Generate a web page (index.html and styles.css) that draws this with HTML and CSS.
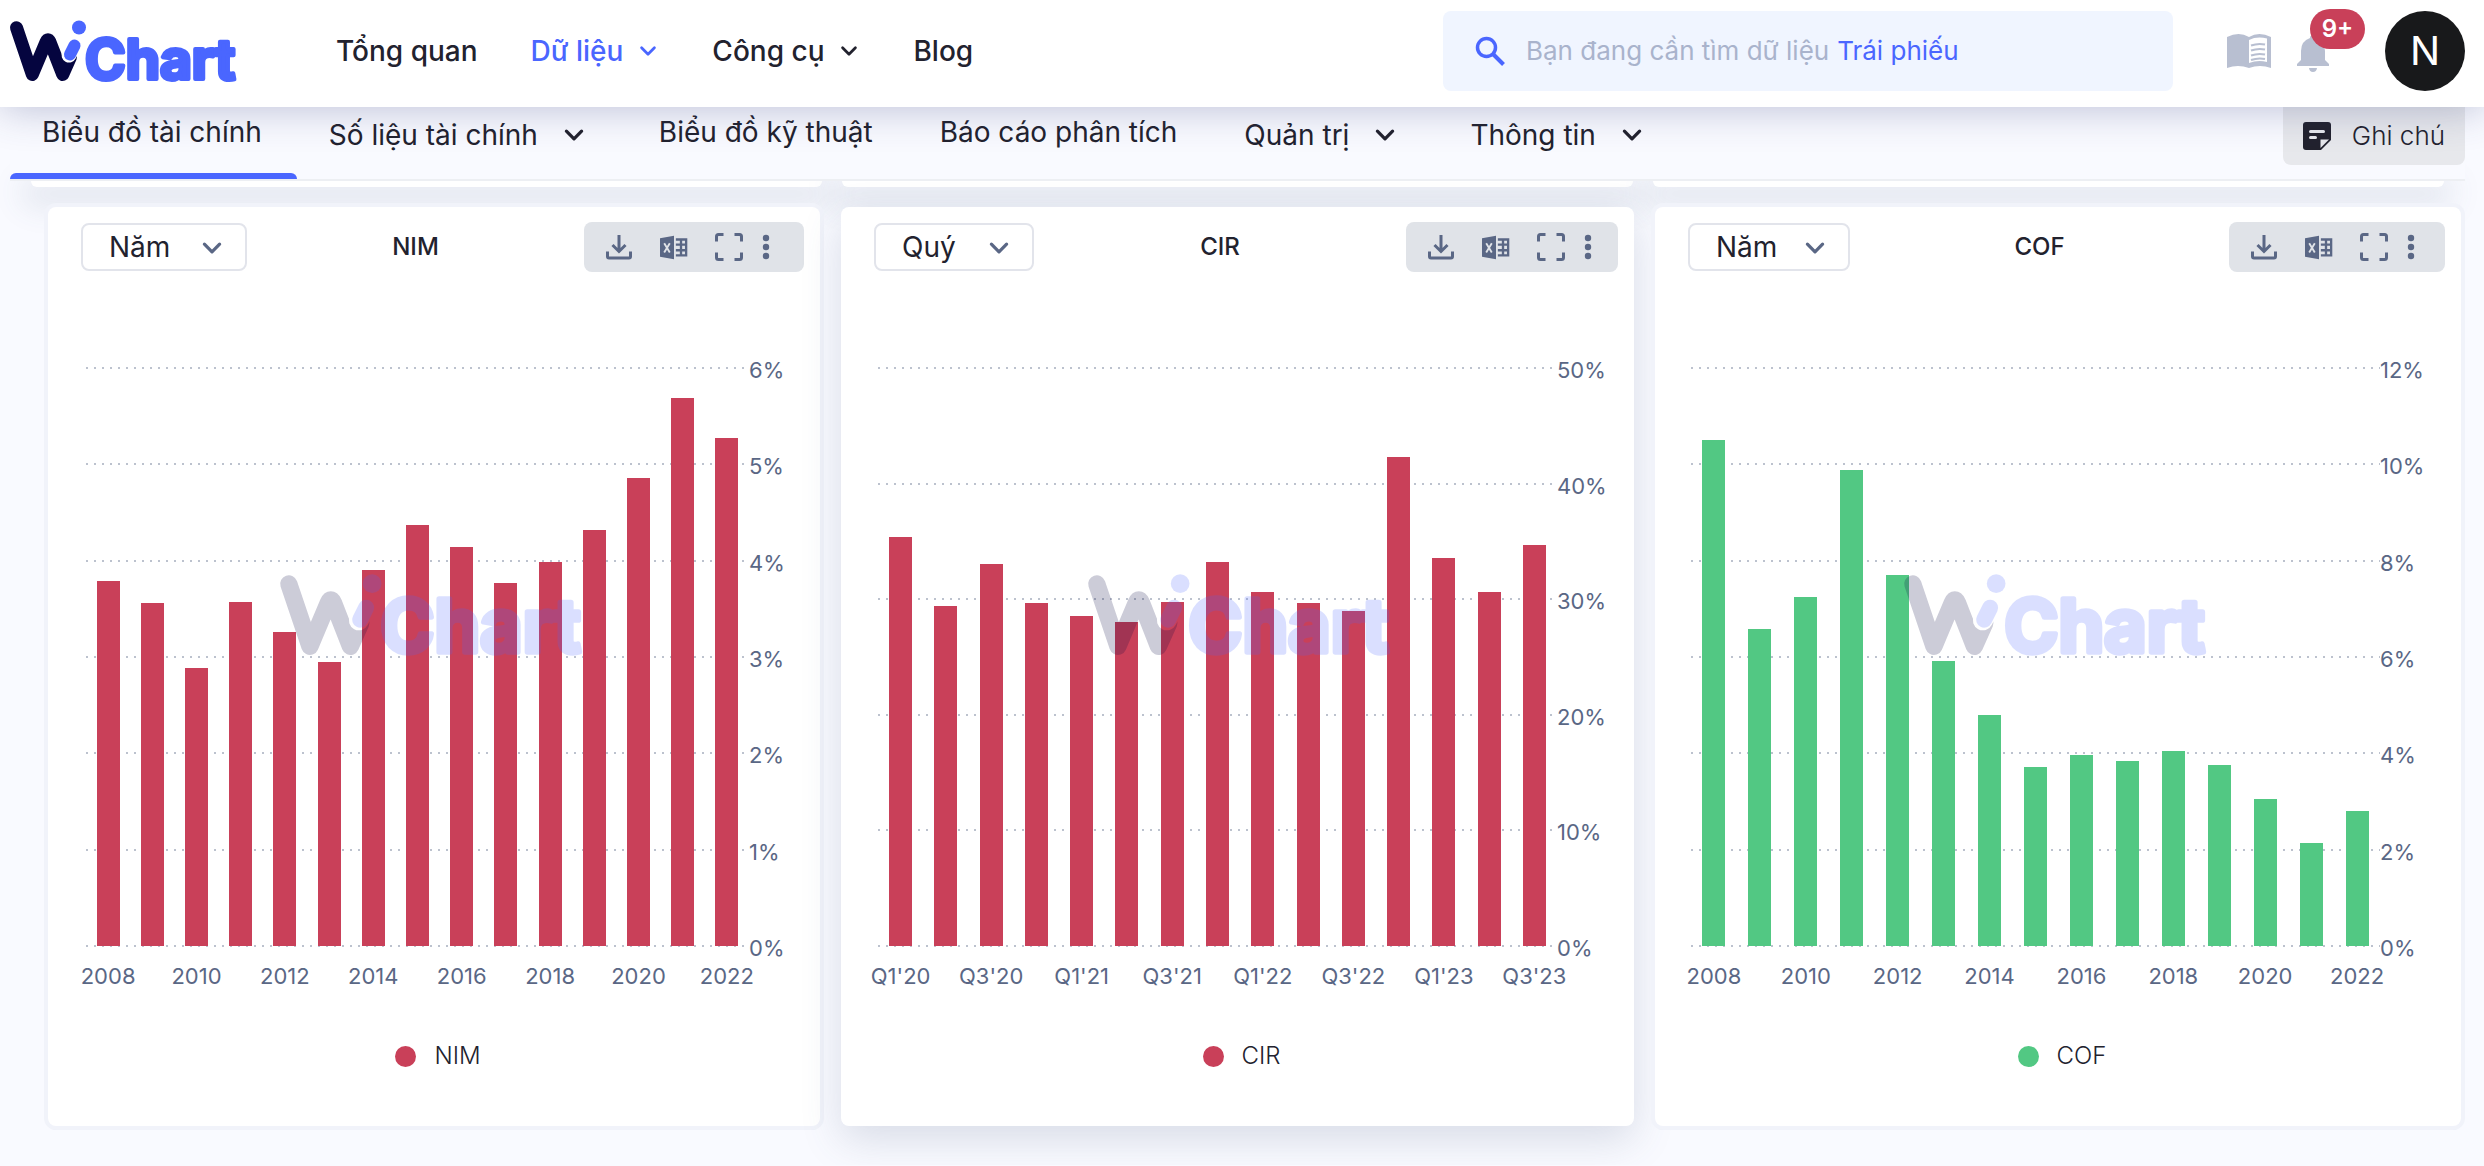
FILE: index.html
```html
<!DOCTYPE html>
<html lang="vi">
<head>
<meta charset="utf-8">
<meta name="viewport" content="width=device-width, initial-scale=1">
<title>WiChart</title>
<link rel="stylesheet" href="styles.css">
</head>
<body>
<svg class="defs" aria-hidden="true">
  <mask id="w-cut" maskUnits="userSpaceOnUse" x="-10" y="-10" width="260" height="90">
    <rect x="-10" y="-10" width="260" height="90" fill="#fff"/>
    <path d="M64.500 23.500 59 34" stroke="#000" stroke-width="15" stroke-linecap="round"/>
  </mask>
  <symbol id="logo" viewBox="0 0 230 60">
    <path mask="url(#w-cut)" d="M6.500 6.700 22.300 53.500 36 21Q38 16.500 40 21L52.700 53.500 60.500 36" fill="none" stroke="#05053f" stroke-width="13" stroke-linecap="round" stroke-linejoin="round"/>
    <path d="M64.500 24.500 60 33.500" stroke="#4a66ff" stroke-width="12" stroke-linecap="round"/>
    <circle cx="69" cy="6.500" r="7" fill="#4a66ff"/>
    <text class="logo-word" x="75" y="58">Chart</text>
  </symbol>
  <symbol id="chevron" viewBox="0 0 24 24"><path d="m5 8.500 7 7 7-7" fill="none" stroke="currentColor" stroke-width="3" stroke-linecap="round" stroke-linejoin="round"/></symbol>
  <symbol id="download" viewBox="0 0 28 28"><path d="M14 2v16M7.500 12l6.500 6.500 6.500-6.500M2.500 18.500v5q0 1.500 1.500 1.500h20q1.500 0 1.500-1.500v-5" fill="none" stroke="currentColor" stroke-width="3"/></symbol>
  <symbol id="excel" viewBox="0 0 30 28"><path d="M0 4.500 15 2v25L0 24.500z" fill="currentColor"/><path d="m4.500 10 6 10m0-10-6 10" stroke="#e0e3e8" stroke-width="2"/><path d="M17 6h11v17H17M17 11.500h11M17 17.500h11M22.500 6v17" fill="none" stroke="currentColor" stroke-width="2.500"/></symbol>
  <symbol id="expand" viewBox="0 0 28 28"><path d="M1.500 8.500V3.500q0-2 2-2h5M19.500 1.500h5q2 0 2 2v5M26.500 19.500v5q0 2-2 2h-5M8.500 26.500h-5q-2 0-2-2v-5" fill="none" stroke="currentColor" stroke-width="3"/></symbol>
  <symbol id="dots" viewBox="0 0 8 28"><circle cx="4" cy="5" r="3.200" fill="currentColor"/><circle cx="4" cy="14" r="3.200" fill="currentColor"/><circle cx="4" cy="23" r="3.200" fill="currentColor"/></symbol>
</svg>

<header class="topbar">
  <a class="brand" href="#" aria-label="WiChart"><svg><use href="#logo"/></svg></a>
  <nav class="menu">
    <a href="#">Tổng quan</a>
    <a class="active" href="#">Dữ liệu<svg><use href="#chevron"/></svg></a>
    <a href="#">Công cụ<svg><use href="#chevron"/></svg></a>
    <a href="#">Blog</a>
  </nav>
  <label class="search">
    <svg viewBox="0 0 30 30" aria-hidden="true"><circle cx="11.500" cy="11.500" r="9" fill="none" stroke="currentColor" stroke-width="3.500"/><path d="m18 18 10.500 10.500" stroke="currentColor" stroke-width="4"/></svg>
    <input type="text" placeholder="Bạn đang cần tìm dữ liệu" aria-label="Tìm kiếm">
    <span>Trái phiếu</span>
  </label>
  <div class="account">
    <button class="plain" aria-label="Hướng dẫn"><svg class="book" viewBox="0 0 44 34"><path d="M0 3Q12-3 22 3 32-3 44 3v31q-11-4-22 0-11-4-22 0z" fill="currentColor"/><path d="M22 6q8-4 18-1.500V28q-9-2.500-18 1z" fill="#fff"/><path d="M24 11.500q7-2.500 14-1M24 16.500q7-2.500 14-1M24 21.500q7-2.500 14-1M24 26q7-2.500 14-1" fill="none" stroke="currentColor" stroke-width="2"/></svg></button>
    <button class="plain bell" aria-label="Thông báo"><svg viewBox="0 0 32 38"><path d="M16 1q3 0 3 3 9 3 9 13v9l4 4v2H0v-2l4-4v-9Q4 7 13 4q0-3 3-3zM12 34h8q-.5 4-4 4t-4-4z" fill="currentColor"/></svg><span class="badge">9+</span></button>
    <button class="avatar">N</button>
  </div>
</header>

<div class="subbar">
  <nav class="tabs">
    <a class="current" href="#">Biểu đồ tài chính</a>
    <a class="drop" href="#">Số liệu tài chính<svg><use href="#chevron"/></svg></a>
    <a href="#">Biểu đồ kỹ thuật</a>
    <a href="#">Báo cáo phân tích</a>
    <a class="drop" href="#">Quản trị<svg><use href="#chevron"/></svg></a>
    <a class="drop" href="#">Thông tin<svg><use href="#chevron"/></svg></a>
  </nav>
  <button class="note"><svg viewBox="0 0 28 28" aria-hidden="true"><path d="M3 0h22q3 0 3 3v15L18 28H3q-3 0-3-3V3q0-3 3-3z" fill="currentColor"/><path d="M17.500 26V17.500H26z" fill="#e7e8ec"/><path d="M7.500 9.500h13M7.500 15.500h5" stroke="#e7e8ec" stroke-width="3" stroke-linecap="round"/></svg>Ghi chú</button>
</div>

<div class="previous" aria-hidden="true"><div></div><div></div><div></div></div>

<main class="cards">
  <section class="card card-nim" data-chart="NIM"></section>
  <section class="card card-cir" data-chart="CIR"></section>
  <section class="card card-cof" data-chart="COF"></section>
</main>
<script src="charts.js"></script>
</body>
</html>
```
FILE: styles.css
```css
* { box-sizing: border-box; }
body {
  margin: 0;
  background: #f9faff;
  color: #22222e;
  font-family: Inter, "Noto Sans", sans-serif;
  font-size: 28px;
  line-height: 36px;
}
a { color: inherit; text-decoration: none; }
button, select, input { font: inherit; color: inherit; }
button { border: 0; padding: 0; cursor: pointer; }
svg { display: block; flex: none; }
symbol { overflow: visible; }
.defs { position: absolute; width: 0; height: 0; }
.logo-word {
  font: 700 55px Inter, sans-serif;
  fill: #4a66ff;
  stroke: #4a66ff;
  stroke-width: 4px;
  stroke-linejoin: round;
}

.topbar {
  position: relative;
  z-index: 3;
  display: flex;
  align-items: center;
  height: 107px;
  padding: 0 19px 5px 10px;
  background: #fff;
  box-shadow: 0 2px 40px rgba(50, 60, 120, .3);
}
.brand svg { width: 230px; height: 60px; overflow: visible; }
.menu {
  display: flex;
  gap: 53px;
  margin-left: 96px;
  font-weight: 500;
}
.menu a { display: flex; align-items: center; gap: 14px; white-space: nowrap; }
.menu svg { width: 22px; height: 22px; }
.active { color: #4a66ff; }
.search {
  display: flex;
  align-items: center;
  width: 730px;
  height: 80px;
  margin-left: auto;
  padding: 0 32px;
  border-radius: 8px;
  background: #f0f5ff;
  color: #4a66ff;
  font-size: 26px;
}
.search svg { width: 30px; height: 30px; margin-right: 21px; }
.search input {
  field-sizing: content;
  padding: 0;
  border: 0;
  outline: 0;
  background: none;
}
.search input::placeholder { color: #a9b3cc; opacity: 1; }
.search span { margin-left: 8px; white-space: nowrap; }
.account { display: flex; align-items: center; margin-left: 54px; }
.plain { background: none; color: #b8bfd1; }
.book { width: 44px; height: 34px; }
.bell { position: relative; margin: 4px 56px 0 26px; }
.bell svg { width: 32px; height: 38px; }
.badge {
  position: absolute;
  left: 13px;
  top: -25px;
  width: 55px;
  height: 40px;
  border-radius: 20px;
  background: #c94059;
  color: #fff;
  font-size: 24px;
  font-weight: 600;
  line-height: 40px;
}
.avatar {
  width: 80px;
  height: 80px;
  border-radius: 50%;
  background: #18191b;
  color: #fff;
  font-size: 40px;
}

.subbar {
  position: relative;
  z-index: 2;
  display: flex;
  justify-content: space-between;
  height: 74px;
  margin: 0 19px 0 10px;
  border-bottom: 2px solid #edeff3;
  background: #f9faff;
}
.tabs { display: flex; }
.tabs a {
  display: flex;
  align-items: center;
  gap: 18px;
  height: 72px;
  padding: 0 35px 22px 32px;
  white-space: nowrap;
}
.tabs .drop { padding-bottom: 16px; }
.tabs svg { width: 36px; height: 26px; }
.tabs .current { position: relative; }
.tabs .current::after {
  content: "";
  position: absolute;
  inset: auto 0 0;
  height: 6px;
  border-radius: 6px 6px 0 0;
  background: #4a66ff;
}
.note {
  display: flex;
  align-items: center;
  gap: 21px;
  height: 58px;
  padding: 0 20px;
  border-radius: 0 0 8px 8px;
  background: #e7e8ec;
  font-size: 26px;
  font-weight: 300;
  white-space: nowrap;
}
.note svg { width: 28px; height: 28px; }

.previous {
  display: grid;
  grid-template-columns: repeat(3, 1fr);
  gap: 20px;
  padding: 0 40px 20px 31px;
}
.previous div {
  height: 6px;
  border-radius: 0 0 8px 8px;
  background: #fff;
  box-shadow: 0 10px 30px 10px rgba(70, 90, 120, .13);
}

.cards {
  position: relative;
  display: grid;
  grid-template-columns: 772fr 793fr 806fr;
  gap: 21px;
  padding: 0 23px 39px 48px;
}
.card {
  min-width: 0;
  padding-top: 15px;
  padding-bottom: 52px;
  border-radius: 8px;
  background: #fff;
  box-shadow: 0 0 0 4px #f1f3fa, 0 4px 0 0 #e7eaf1;
}
.card-nim { --accent: #c94059; --left: 38px; --right: 71px; --select: 166px; --tools: 220px; --mark: -138px; }
.card-cir {
  --accent: #c94059; --left: 37px; --right: 77px; --select: 160px; --tools: 212px; --mark: -130px;
  box-shadow: 0 14px 40px rgba(70, 90, 120, .18);
}
.card-cof { --accent: #52c883; --left: 36px; --right: 81px; --select: 162px; --tools: 216px; --mark: -132px; }

.card-head {
  display: flex;
  align-items: center;
  justify-content: space-between;
  height: 50px;
  padding: 0 16px 0 33px;
}
.card-head h2 { margin: 0; font-size: 24px; font-weight: 500; }
.period { position: relative; width: var(--select); }
.period select {
  appearance: none;
  width: 100%;
  height: 48px;
  padding: 0 26px;
  border: 2px solid #e2e4eb;
  border-radius: 8px;
  background: #fff;
}
.period svg {
  position: absolute;
  right: 22px;
  top: 12px;
  width: 26px;
  height: 26px;
  color: #5a6785;
  pointer-events: none;
}
.tools {
  display: flex;
  align-items: center;
  gap: 27px;
  width: var(--tools);
  height: 50px;
  padding-left: 21px;
  border-radius: 8px;
  background: #e0e3e8;
}
.tools button { background: none; color: #5a6785; }
.tools svg { width: 28px; height: 28px; }
.tools .more { margin-left: -8px; }
.tools .more svg { width: 8px; }

.chart {
  display: grid;
  grid-template-columns: 1fr var(--right);
  margin: 95px 0 0 var(--left);
  color: #5a6785;
  font-size: 22px;
  line-height: 28px;
}
.plot { position: relative; height: 580px; }
.lines {
  position: absolute;
  inset: 0;
  display: flex;
  flex-direction: column;
  justify-content: space-between;
}
.lines i {
  height: 2px;
  background: repeating-linear-gradient(90deg, #bcc2ce 0 2px, transparent 2px 8px);
}
.bars {
  position: relative;
  display: grid;
  grid-auto-flow: column;
  grid-auto-columns: 1fr;
  align-items: end;
  justify-items: center;
  height: 579px;
}
.bars i { width: 23px; background: var(--accent); }
.watermark {
  position: absolute;
  left: calc(50% + var(--mark));
  top: 208px;
  width: 307px;
  height: 80px;
  overflow: visible;
  opacity: .2;
}
.scale {
  display: flex;
  flex-direction: column;
  justify-content: space-between;
  margin: -11px 0 -15px;
}
.years {
  display: grid;
  grid-auto-flow: column;
  grid-auto-columns: minmax(0, 1fr);
  margin-top: 15px;
}
.years span { display: flex; justify-content: center; white-space: nowrap; }
.legend {
  display: flex;
  align-items: center;
  justify-content: center;
  gap: 18px;
  margin-top: 48px;
  padding-left: 8px;
  font-size: 24px;
  font-weight: 300;
}
.legend i { width: 21px; height: 21px; border-radius: 50%; background: var(--accent); }
```
FILE: charts.js
```js
const years = Array.from({ length: 15 }, (_, i) => String(2008 + i));
const quarters = Array.from({ length: 15 }, (_, i) => `Q${i % 4 + 1}'${20 + Math.floor(i / 4)}`);

const charts = {
  NIM: { period: 'Năm', max: 6, step: 1, labels: years,
    values: [3.78, 3.55, 2.88, 3.56, 3.25, 2.94, 3.90, 4.36, 4.13, 3.76, 3.98, 4.31, 4.85, 5.68, 5.26] },
  CIR: { period: 'Quý', max: 50, step: 10, labels: quarters,
    values: [35.3, 29.4, 33.0, 29.6, 28.5, 28.0, 29.7, 33.2, 30.6, 29.6, 28.9, 42.2, 33.5, 30.6, 34.6] },
  COF: { period: 'Năm', max: 12, step: 2, labels: years,
    values: [10.49, 6.56, 7.23, 9.87, 7.68, 5.90, 4.79, 3.71, 3.96, 3.83, 4.04, 3.75, 3.05, 2.14, 2.80] },
};

const icon = (id) => `<svg aria-hidden="true"><use href="#${id}"/></svg>`;

document.querySelectorAll('[data-chart]').forEach((card) => {
  const name = card.dataset.chart;
  const { period, max, step, labels, values } = charts[name];
  const ticks = [];
  for (let t = max; t >= 0; t -= step) ticks.push(t);
  const other = period === 'Năm' ? 'Quý' : 'Năm';

  card.innerHTML = `
    <div class="card-head">
      <div class="period">
        <select aria-label="Kỳ ${name}"><option>${period}</option><option>${other}</option></select>
        ${icon('chevron')}
      </div>
      <h2>${name}</h2>
      <div class="tools">
        <button aria-label="Tải xuống">${icon('download')}</button>
        <button aria-label="Xuất Excel">${icon('excel')}</button>
        <button aria-label="Toàn màn hình">${icon('expand')}</button>
        <button class="more" aria-label="Thêm">${icon('dots')}</button>
      </div>
    </div>
    <div class="chart">
      <div class="plot">
        <div class="lines">${ticks.map(() => '<i></i>').join('')}</div>
        <div class="bars">${values.map((v) => `<i style="height:${v / max * 100}%"></i>`).join('')}</div>
        <svg class="watermark" aria-hidden="true"><use href="#logo"/></svg>
      </div>
      <div class="scale">${ticks.map((t) => `<span>${t}%</span>`).join('')}</div>
      <div class="years">${labels.map((l, i) => `<span>${i % 2 ? '' : l}</span>`).join('')}</div>
    </div>
    <div class="legend"><i></i>${name}</div>`;
});
```
